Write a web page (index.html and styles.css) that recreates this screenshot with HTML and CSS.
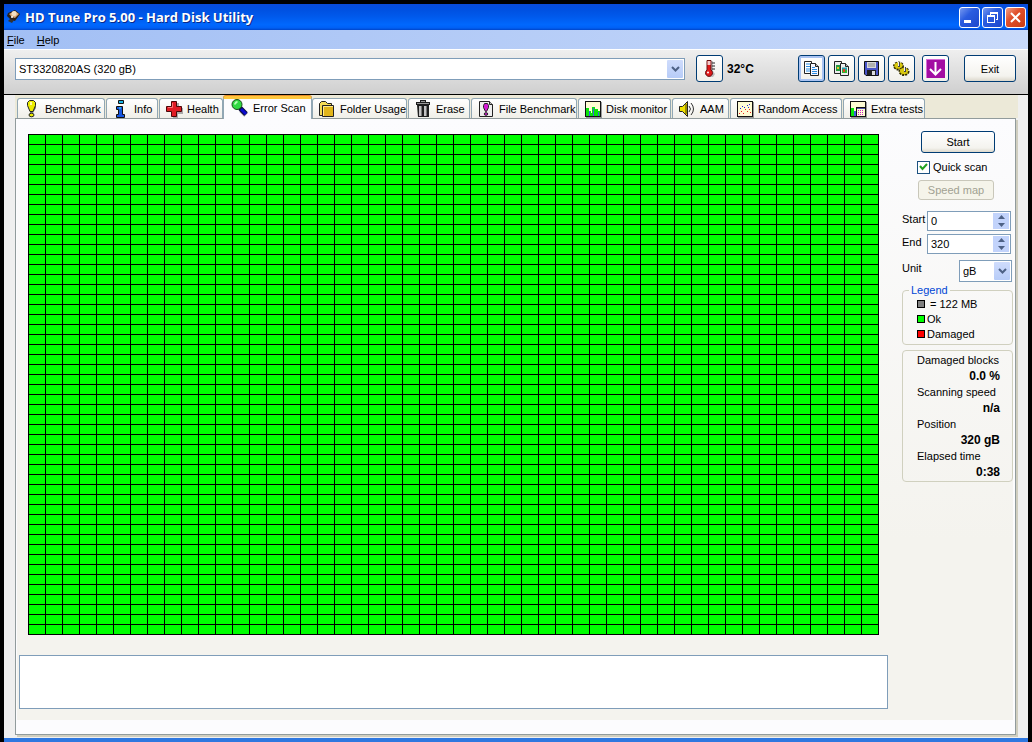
FILE: index.html
```html
<!DOCTYPE html>
<html lang="en">
<head>
<meta charset="utf-8">
<title>HD Tune Pro 5.00 - Hard Disk Utility</title>
<link rel="stylesheet" href="styles.css">
</head>
<body>
<div class="window">
  <header class="titlebar">
    <svg class="app-icon" viewBox="0 0 16 16" width="16" height="16"><path d="M2 4l7-3 5 4-5 7-4-1-4-4z" fill="#2b2118"/><path d="M3 5l6-3 4 3-4 4-3-1z" fill="#d9a878"/><circle cx="8" cy="4.500" r="2.500" fill="#f2dfc4"/><path d="M4 10l4 1-2 3-4-2z" fill="#333"/><circle cx="6" cy="8" r="1" fill="#fff"/></svg>
    <h1 class="title">HD Tune Pro 5.00 - Hard Disk Utility</h1>
    <div class="caption-buttons">
      <button class="caption" aria-label="Minimize"><svg viewBox="0 0 19 19" width="19" height="19"><path d="M4 12h7v3H4z" fill="#fff"/></svg></button>
      <button class="caption" aria-label="Restore"><svg viewBox="0 0 19 19" width="19" height="19" shape-rendering="crispEdges"><path d="M7 4h8v2H7zM14 6h1v6h-2v-1h1zM7 6h1v1H7zM4 7h8v2H4zM4 9h1v6H4zM11 9h1v6h-1zM4 14h8v1H4z" fill="#fff"/></svg></button>
      <button class="caption caption-close" aria-label="Close"><svg viewBox="0 0 19 19" width="19" height="19"><path d="M5 5l9 9M14 5l-9 9" stroke="#fff" stroke-width="2" fill="none"/></svg></button>
    </div>
  </header>
  <nav class="menubar">
    <button class="menu"><u>F</u>ile</button>
    <button class="menu"><u>H</u>elp</button>
  </nav>
  <div class="toolbar">
    <div class="combo drive">
      <select aria-label="Drive"><option>ST3320820AS (320 gB)</option></select>
      <span class="drop"><svg viewBox="0 0 9 6" width="9" height="6"><path d="M1 1l3.500 3.500L8 1" fill="none" stroke="#4d6185" stroke-width="2"/></svg></span>
    </div>
    <button class="tool" aria-label="Temperature"><svg viewBox="0 0 21 21" width="21" height="21"><path d="M12 3h2v10l2 3-2 3h-5" fill="#999" opacity=".6"/><path d="M8 2.500h4v9.500a3.500 3.500 0 1 1-4 0z" fill="#e01818" stroke="#611" /><path d="M8.500 3h3v4h-3z" fill="#f3caca"/><path d="M13 5h3M13 8h3M13 11h3" stroke="#222"/><circle cx="9" cy="14.500" r="1" fill="#fff"/></svg></button>
    <output class="temp">32°C</output>
    <div class="tool-group">
      <button class="tool tool-default" aria-label="Copy text"><svg viewBox="0 0 21 21" width="21" height="21"><path d="M3.500 3.500h7v12h-7z" fill="#fff" stroke="#222"/><path d="M5 6h4M5 8.500h4M5 11h4M5 13h4" stroke="#2a8be0"/><path d="M9.500 5.500h5l3 3v9h-8z" fill="#f7f7ff" stroke="#222"/><path d="M14.500 5.500v3h3" fill="#bbb" stroke="#222"/><path d="M11 9.500h3M11 11.500h5M11 13.500h5M11 15.500h5" stroke="#2a8be0"/></svg></button>
      <button class="tool" aria-label="Copy screenshot"><svg viewBox="0 0 21 21" width="21" height="21"><path d="M3.500 3.500h7v12h-7z" fill="#eee" stroke="#222"/><path d="M5 7h4v6H5z" fill="#279b3d"/><path d="M6 9h2v2H6z" fill="#e8c52e"/><path d="M9.500 5.500h5l3 3v9h-8z" fill="#eee" stroke="#222"/><path d="M14.500 5.500v3h3" fill="#bbb" stroke="#222"/><path d="M11 9.500h5v5h-5z" fill="#2a9fa8"/><path d="M11 12h5v3h-5z" fill="#32b632"/><path d="M12 11h2v3h-2z" fill="#e04a20"/></svg></button>
      <button class="tool" aria-label="Save"><svg viewBox="0 0 21 21" width="21" height="21"><path d="M3.500 3.500h14v14H5l-1.500-1.500z" fill="#4a55c8" stroke="#111"/><path d="M6 4h9v6H6z" fill="#d8d8d8"/><path d="M7 6h7M7 8h7" stroke="#888"/><path d="M6 12h9v5H6z" fill="#222"/><path d="M11 13h3v4h-3z" fill="#ddd"/></svg></button>
      <button class="tool" aria-label="Options"><svg viewBox="0 0 21 21" width="21" height="21"><ellipse cx="7.500" cy="8" rx="4.500" ry="3.500" fill="#c8b800" stroke="#332d00" stroke-width="2" stroke-dasharray="2 1"/><ellipse cx="7.500" cy="7.500" rx="4" ry="3" fill="#d8c810"/><ellipse cx="13" cy="13.500" rx="4.500" ry="3.500" fill="#c8b800" stroke="#332d00" stroke-width="2" stroke-dasharray="2 1"/><ellipse cx="13" cy="13" rx="4" ry="3" fill="#d8c810"/><path d="M8 4v5M14 9v5" stroke="#444" stroke-width="2"/><path d="M7.500 4v4M13.500 9v4" stroke="#eee"/></svg></button>
    </div>
    <button class="tool" aria-label="Minimize to tray"><svg viewBox="0 0 21 21" width="21" height="21"><path d="M1 1h19v19H1z" fill="#a20da2"/><path d="M1 1h19v1H2v18H1z" fill="#d66bd6"/><path d="M10.500 4v12M5 11l5.500 5.500L16 11" fill="none" stroke="#fff" stroke-width="2"/></svg></button>
    <button class="push exit">Exit</button>
  </div>
  <main class="body">
    <div class="tabs" role="tablist">
      <button class="tab" role="tab"><svg viewBox="0 0 20 20" width="20" height="20"><path d="M8 3h5l1 2v4l-3 5v4H8z" fill="#888"/><path d="M7.500 1.500h4l2 2v3l-2.500 6h-3L5.500 6.500v-3z" fill="#eaea00" stroke="#222"/><path d="M8 3h2v3H8z" fill="#fff9a0"/><ellipse cx="9.500" cy="16" rx="2.500" ry="1.800" fill="#eaea00" stroke="#222"/></svg>Benchmark</button>
      <button class="tab" role="tab"><svg viewBox="0 0 20 20" width="20" height="20"><path d="M7.500 1.500h5v3h-5z" fill="#1cb7e8" stroke="#111"/><path d="M5.500 7.500h6v8h2v3h-8v-3h2v-5h-2z" fill="#1554e0" stroke="#111"/><path d="M8 8h2v2H8z" fill="#28a8f0"/></svg>Info</button>
      <button class="tab" role="tab"><svg viewBox="0 0 20 20" width="20" height="20"><path d="M9 4h6v5h4v6h-5v4H9z" fill="#aaa"/><path d="M7.500 2.500h5v5h5v5h-5v5h-5v-5h-5v-5h5z" fill="#e01c24" stroke="#4b0808"/><path d="M8.500 4v4.500H4" fill="none" stroke="#ff7474"/></svg>Health</button>
      <button class="tab tab-active" role="tab" aria-selected="true"><svg viewBox="0 0 20 20" width="20" height="20"><path d="M12 12l5 5" stroke="#999" stroke-width="5"/><path d="M11 10l6 6" stroke="#060640" stroke-width="5"/><path d="M12 11l5 5" stroke="#0b0bd0" stroke-width="3"/><circle cx="8" cy="6.500" r="5" fill="#31d943" stroke="#174a18"/><path d="M5 6q1-3 3-3l1 1-3 3z" fill="#b6ffb8"/></svg>Error Scan</button>
      <button class="tab" role="tab"><svg viewBox="0 0 20 20" width="20" height="20"><path d="M2.500 16.500v-12l2-2h4l2 2h4v12z" fill="#f5dc55" stroke="#222"/><path d="M5.500 6.500h11v11h-11z" fill="#e1b51a" stroke="#222"/><path d="M6.500 17V7.500H16" fill="none" stroke="#ffe98a"/></svg>Folder Usage</button>
      <button class="tab" role="tab"><svg viewBox="0 0 20 20" width="20" height="20"><path d="M3 3h4V1h6v2h4v3H3zM4 6h12v12H5z" fill="#1e1e1e"/><path d="M6 7h2v10H6zM11 7h2v10h-2z" fill="#c4c4c4"/><path d="M8 7h1v10H8zM13 7h1v10h-1z" fill="#777"/><path d="M4 4h12v1H4zM8 2h4v1H8z" fill="#999"/></svg>Erase</button>
      <button class="tab" role="tab"><svg viewBox="0 0 20 20" width="20" height="20"><path d="M3.500 2.500h10l3 3v12h-13z" fill="#eee" stroke="#222"/><path d="M13.500 2.500v3h3" fill="#bbb" stroke="#222"/><path d="M8.500 4.500h3l1 2v2l-2 4h-1l-2-4v-2z" fill="#d218d2" stroke="#222"/><ellipse cx="10" cy="15" rx="1.800" ry="1.300" fill="#d218d2" stroke="#222"/></svg>File Benchmark</button>
      <button class="tab" role="tab"><svg viewBox="0 0 20 20" width="20" height="20" shape-rendering="crispEdges"><path d="M3 3h16v16H3z" fill="#999"/><path d="M2 2h16v16H2z" fill="#111"/><path d="M3 3h14v14H3z" fill="#fffcd4"/><path d="M3 9h3v3h2v2h1V8h3v2h3v2h2v5H3z" fill="#0be50b"/><path d="M6 12h1v5H6zM10 9h1v8h-1zM15 13h1v4h-1z" fill="#425de2"/></svg>Disk monitor</button>
      <button class="tab" role="tab"><svg viewBox="0 0 20 20" width="20" height="20"><path d="M2.500 7.500h3l5-5v15l-5-5h-3z" fill="#eee000" stroke="#222"/><path d="M9 5v10" stroke="#998c00" stroke-width="2"/><path d="M12 7q3 3 0 6M14 4q5 6 0 12" fill="none" stroke="#333"/></svg>AAM</button>
      <button class="tab" role="tab"><svg viewBox="0 0 20 20" width="20" height="20" shape-rendering="crispEdges"><path d="M3 3h16v16H3z" fill="#999"/><path d="M2 2h16v16H2z" fill="#111"/><path d="M3 3h14v14H3z" fill="#fffcd4"/><path d="M4 14h1v1H4zM6 12h1v1H6zM8 14h1v1H8zM10 10h1v1h-1zM12 12h1v1h-1zM14 10h1v1h-1zM15 13h1v1h-1z" fill="#e22"/><path d="M5 9h1v1H5zM7 7h1v1H7zM9 8h1v1H9zM12 6h1v1h-1zM14 5h1v1h-1zM13 8h1v1h-1z" fill="#22d"/></svg>Random Access</button>
      <button class="tab" role="tab"><svg viewBox="0 0 20 20" width="20" height="20" shape-rendering="crispEdges"><path d="M3 3h16v16H3z" fill="#999"/><path d="M2 2h16v16H2z" fill="#111"/><path d="M3 3h14v14H3z" fill="#fffcd4"/><path d="M3 9h3v8H3z" fill="#0be50b"/><path d="M6 12h2v5H6z" fill="#425de2"/><path d="M8 8h9v1H8zM8 8h1v9H8z" fill="#111"/><path d="M9 9h8v1H9z" fill="#55a"/><path d="M10 11h1v1h-1zM12 11h1v1h-1zM14 11h1v1h-1zM10 13h1v1h-1zM12 13h1v1h-1zM14 13h1v1h-1zM10 15h1v1h-1zM12 15h1v1h-1zM14 15h1v1h-1z" fill="#c2c"/></svg>Extra tests</button>
    </div>
    <section class="panel" role="tabpanel">
      <div class="page">
        <div class="scan">
          <div class="blocks" role="img" aria-label="Scanned blocks"></div>
          <textarea class="log" aria-label="Scan log" readonly></textarea>
        </div>
        <form class="side">
          <button type="button" class="push start">Start</button>
          <label class="check"><input type="checkbox" checked><svg viewBox="0 0 13 13" width="13" height="13"><path d="M3 6l2.500 3L10 4" fill="none" stroke="#21a121" stroke-width="2"/></svg>Quick scan</label>
          <button type="button" class="push map" disabled>Speed map</button>
          <div class="field">
            <label for="from">Start</label>
            <div class="spin"><input id="from" type="text" value="0"><span class="arrows"><button type="button" aria-label="Increase start"><svg viewBox="0 0 7 4" width="7" height="4"><path d="M0 4l3.500-4L7 4z" fill="#4d6185"/></svg></button><button type="button" aria-label="Decrease start"><svg viewBox="0 0 7 4" width="7" height="4"><path d="M0 0l3.500 4L7 0z" fill="#4d6185"/></svg></button></span></div>
          </div>
          <div class="field">
            <label for="to">End</label>
            <div class="spin"><input id="to" type="text" value="320"><span class="arrows"><button type="button" aria-label="Increase end"><svg viewBox="0 0 7 4" width="7" height="4"><path d="M0 4l3.500-4L7 4z" fill="#4d6185"/></svg></button><button type="button" aria-label="Decrease end"><svg viewBox="0 0 7 4" width="7" height="4"><path d="M0 0l3.500 4L7 0z" fill="#4d6185"/></svg></button></span></div>
          </div>
          <div class="field unit">
            <label for="unit">Unit</label>
            <div class="combo">
              <select id="unit"><option>gB</option></select>
              <span class="drop"><svg viewBox="0 0 9 6" width="9" height="6"><path d="M1 1l3.500 3.500L8 1" fill="none" stroke="#4d6185" stroke-width="2"/></svg></span>
            </div>
          </div>
          <fieldset class="group legend">
            <legend>Legend</legend>
            <ul>
              <li><i class="swatch size"></i>= 122 MB</li>
              <li><i class="swatch ok"></i>Ok</li>
              <li><i class="swatch bad"></i>Damaged</li>
            </ul>
          </fieldset>
          <dl class="group stats">
            <dt>Damaged blocks</dt><dd>0.0 %</dd>
            <dt>Scanning speed</dt><dd>n/a</dd>
            <dt>Position</dt><dd>320 gB</dd>
            <dt>Elapsed time</dt><dd>0:38</dd>
          </dl>
        </form>
      </div>
    </section>
  </main>
</div>
</body>
</html>
```
FILE: styles.css
```css
* { box-sizing: border-box; }

body {
  margin: 0;
  padding: 4px 4px 0;
  background: #000;
  color: #000;
  font: 11px/14px "Liberation Sans", Arial, sans-serif;
}

button, input, select, textarea {
  font: inherit;
  color: inherit;
  margin: 0;
  padding: 0;
  border: 0;
  border-radius: 0;
}

svg { display: block; flex: none; }

.window {
  display: flex;
  flex-direction: column;
  min-height: calc(100vh - 4px);
  background: #efefef;
  border-bottom: 4px solid #2f78e0;
}

.titlebar {
  display: flex;
  align-items: center;
  height: 26px;
  padding: 0 2px 0 2px;
  gap: 3px;
  background: linear-gradient(#0a4ad8, #0050e0 20%, #0058ea 45%, #0068fe 80%, #0060f5 92%, #0044c8);
}
.title {
  flex: 1;
  margin: 0;
  color: #fff;
  font: bold 13px/18px "Open Sans", sans-serif;
  text-shadow: 1px 1px #0a2a8a;
}
.caption-buttons { display: flex; gap: 2px; }
.caption {
  width: 21px;
  height: 21px;
  border: 1px solid #fff;
  border-radius: 3px;
  background: linear-gradient(135deg, #7799f0, #2a5ce0 40%, #1c47cc);
}
.caption-close { background: linear-gradient(135deg, #f0a088, #e0502c 40%, #c83c14); }

.menubar {
  display: flex;
  align-items: center;
  height: 19px;
  padding-left: 3px;
  gap: 12px;
  background: linear-gradient(90deg, #a2bff4, #c9dafa);
}
.menu { background: none; }

.toolbar {
  display: flex;
  align-items: center;
  height: 46px;
  padding: 0 12px 7px 11px;
  border-top: 1px solid #fff;
  border-bottom: 1px solid #000;
  background: linear-gradient(#efefef, #cfcfcf);
}

.combo { position: relative; }
.combo select {
  appearance: none;
  display: block;
  width: 100%;
  height: 22px;
  padding: 0 20px 0 3px;
  border: 1px solid #7f9db9;
  background: #fff;
}
.combo .drop {
  position: absolute;
  top: 2px;
  right: 2px;
  bottom: 2px;
  width: 16px;
  display: grid;
  place-items: center;
  border-radius: 1px;
  background: linear-gradient(#cfdcfc, #b7ccf8);
  pointer-events: none;
}
.drive { flex: 1; margin-right: 11px; }

.tool {
  display: grid;
  place-items: center;
  width: 27px;
  height: 27px;
  border: 1px solid #003c74;
  border-radius: 3px;
  background: linear-gradient(#fff, #f1f0ea);
}
.tool-default { box-shadow: inset 0 0 0 2px #a9c3f2; }
.temp {
  width: 75px;
  padding-left: 4px;
  font: bold 12px/14px "Liberation Sans", Arial, sans-serif;
}
.tool-group { display: flex; gap: 3px; margin-right: 7px; }

.push {
  border: 1px solid #003c74;
  border-radius: 3px;
  background: linear-gradient(#fff, #f4f3ee 80%, #dcd8cc);
}
.push:disabled {
  border-color: #c9c7ba;
  background: #f5f4ea;
  color: #a1a192;
}
.exit { width: 52px; height: 27px; margin-left: 15px; }

.body {
  flex: 1;
  display: flex;
  flex-direction: column;
  margin: 0 12px 3px 11px;
}

.tabs {
  display: grid;
  grid-template-columns: 88px 52px 64px 87px 95px 62px 106px 93px 57px 112px 82px;
  column-gap: 1px;
  align-items: end;
  height: 23px;
  padding-left: 2px;
  margin-right: -2px;
  background: #ece9d8;
}
.tab {
  display: flex;
  align-items: center;
  gap: 3px;
  height: 20px;
  padding-left: 4px;
  border: 1px solid #91a7b4;
  border-bottom: 0;
  border-radius: 3px 3px 0 0;
  background: linear-gradient(#fff, #f0efe8);
  white-space: nowrap;
}
.tab-active {
  z-index: 1;
  height: 23px;
  margin: 0 -1px -1px;
  padding: 0 0 2px 5px;
  gap: 4px;
  border-top: 3px solid #ffc73c;
  box-shadow: 0 -1px #e68b2c;
  background: #fcfcfe;
}

.panel {
  flex: 1;
  display: flex;
  padding: 1px 2px 14px 1px;
  border: 1px solid #919b9c;
  box-shadow: 2px 2px #d0cebf;
  background: #fcfcfe;
}
.page {
  flex: 1;
  display: flex;
  align-items: flex-start;
  justify-content: space-between;
  padding: 11px 0 11px 2px;
  background: linear-gradient(#fcfcfe, #f4f3ee 70%);
}
.scan {
  flex: 1;
  display: flex;
  flex-direction: column;
  align-self: stretch;
}
/* 50 x 50 map, one 17 x 10 block per cell */
.blocks {
  height: 501px;
  margin: 3px 9px 0;
  background:
    repeating-linear-gradient(90deg, #000 0 1px, transparent 1px 17px),
    repeating-linear-gradient(#000 0 1px, #0f0 1px 10px);
}
.log {
  display: block;
  width: 100%;
  height: 54px;
  margin-top: 20px;
  border: 1px solid #7f9db9;
  background: #fff;
  resize: none;
}

.side {
  display: flex;
  flex-direction: column;
  width: 111px;
  margin-left: 14px;
}
.start { width: 74px; height: 22px; margin-left: 19px; }
.check {
  position: relative;
  display: flex;
  align-items: center;
  gap: 3px;
  margin: 7px 0 6px 15px;
}
.check input {
  appearance: none;
  width: 13px;
  height: 13px;
  border: 1px solid #1c5180;
  background: #fff;
}
.check svg { position: absolute; left: 0; top: 0; pointer-events: none; }
.map { width: 76px; height: 20px; margin: 0 0 11px 16px; }

.field {
  display: flex;
  justify-content: space-between;
  margin: 0 2px 3px 0;
}
.field label { padding-top: 1px; }
.spin {
  display: flex;
  width: 84px;
  height: 20px;
  padding: 1px;
  border: 1px solid #7f9db9;
  background: #fff;
}
.spin input {
  flex: 1;
  min-width: 0;
  padding-left: 2px;
  background: none;
}
.arrows { display: grid; width: 16px; }
.arrows button {
  display: grid;
  place-items: center;
  background: #c2d3fb;
}
.unit { margin: 3px 1px 1px 0; }
.unit .combo { width: 53px; }

.group {
  margin: 0;
  border: 1px solid #d0d0bf;
  border-radius: 4px;
}
.legend {
  height: 62px;
  padding: 0 0 0 14px;
}
.legend legend {
  margin-left: -8px;
  padding: 0 2px;
  color: #0046d5;
}
.legend ul { margin: -1px 0 0; padding: 0; list-style: none; }
.legend li {
  display: flex;
  align-items: center;
  gap: 2px;
  height: 15px;
}
.swatch { width: 8px; height: 8px; border: 1px solid #000; }
.size { background: #808080; margin-right: 3px; }
.ok { background: #0f0; }
.bad { background: #f00; }

.stats {
  margin-top: 5px;
  padding: 1px 12px 1px 14px;
}
.stats dt { line-height: 16px; }
.stats dd {
  margin: 0;
  font: bold 12px/16px "Liberation Sans", Arial, sans-serif;
  text-align: right;
}
```
